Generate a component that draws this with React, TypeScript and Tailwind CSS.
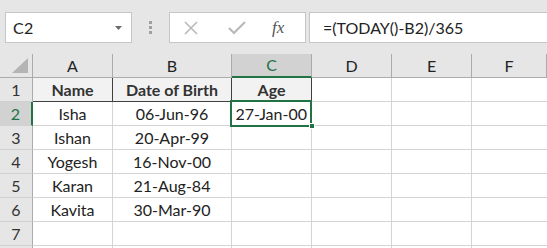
import React from "react";

const font = { fontFamily: "Lato, 'Open Sans', sans-serif" };

const rows = [
  ["Isha", "06-Jun-96"],
  ["Ishan", "20-Apr-99"],
  ["Yogesh", "16-Nov-00"],
  ["Karan", "21-Aug-84"],
  ["Kavita", "30-Mar-90"],
];

const cols = ["A", "B", "C", "D", "E", "F"];

const FormulaBar = () => (
  <div className="h-[54px] bg-[#e6e6e6] flex items-start pt-[12px] pl-[5px]">
    <div className="w-[127px] h-[31px] bg-white border border-[#c6c6c6] flex items-center justify-between pl-[7px] pr-[9px]">
      <span className="text-[16px] text-[#222] tracking-[0.3px]">C2</span>
      <svg width="7" height="4" viewBox="0 0 7 4">
        <polygon points="0,0 7,0 3.5,4" fill="#6b6b6b" />
      </svg>
    </div>
    <div className="w-[37px] h-[31px] flex flex-col items-center justify-center gap-[2px]">
      <div className="w-[3px] h-[3px] bg-[#a0a0a0]" />
      <div className="w-[3px] h-[3px] bg-[#a0a0a0]" />
      <div className="w-[3px] h-[3px] bg-[#a0a0a0]" />
    </div>
    <div className="w-[137px] h-[31px] bg-white border border-[#c6c6c6] flex items-center pl-[14px]">
      <svg width="14" height="14" viewBox="0 0 14 14">
        <path d="M1 1 L13 13 M13 1 L1 13" stroke="#b9b9b9" strokeWidth="1.6" />
      </svg>
      <svg width="18" height="14" viewBox="0 0 18 14" className="ml-[30px]">
        <path d="M1 7 L6 12 L17 1" stroke="#b9b9b9" strokeWidth="2.2" fill="none" />
      </svg>
      <span
        className="ml-[26px] text-[17px] italic text-[#555]"
        style={{ fontFamily: "'Liberation Serif', serif" }}
      >
        fx
      </span>
    </div>
    <div className="flex-1 ml-[3px] h-[31px] bg-white border border-r-0 border-[#c6c6c6] flex items-center pl-[13px]">
      <span className="text-[16px] text-[#222]">=(TODAY()-B2)/365</span>
    </div>
  </div>
);

export default function App() {
  return (
    <div className="w-[547px] h-[248px] overflow-hidden bg-white" style={font}>
      <FormulaBar />
      <div className="grid grid-cols-[33px_80px_119px_80px_80px_80px_1fr] auto-rows-[24px] text-[16px] text-[#222]">
        {/* column headers */}
        <div className="bg-[#e6e6e6] border-r border-b border-[#ababab] flex items-end justify-end pr-[4px] pb-[4px]">
          <svg width="16" height="15" viewBox="0 0 16 15">
            <polygon points="16,0 16,15 0,15" fill="#b4b4b4" />
          </svg>
        </div>
        {cols.map((c) =>
          c === "C" ? (
            <div
              key={c}
              className="bg-[#d2d2d2] border-r border-[#ababab] border-b-2 border-b-[#217346] flex items-center justify-center text-[#217346]"
            >
              {c}
            </div>
          ) : (
            <div
              key={c}
              className="bg-[#e6e6e6] border-r border-b border-[#ababab] flex items-center justify-center"
            >
              {c}
            </div>
          )
        )}

        {/* row 1 */}
        <div className="bg-[#e6e6e6] border-r border-b border-[#ababab] border-b-[#d0d0d0] flex items-center justify-center text-[#333]">
          1
        </div>
        <div className="bg-[#f2f2f2] border-r border-b border-[#3f3f3f] flex items-center justify-center font-bold text-[#333]">
          Name
        </div>
        <div className="bg-[#f2f2f2] border-r border-b border-[#3f3f3f] flex items-center justify-center font-bold text-[#333]">
          Date of Birth
        </div>
        <div className="bg-[#f2f2f2] border-r border-b border-[#3f3f3f] flex items-center justify-center font-bold text-[#333]">
          Age
        </div>
        <div className="border-r border-b border-[#d4d4d4]" />
        <div className="border-r border-b border-[#d4d4d4]" />
        <div className="border-b border-[#d4d4d4]" />

        {/* data rows */}
        {rows.map(([name, dob], i) => (
          <React.Fragment key={name}>
            {i === 0 ? (
              <div className="bg-[#d2d2d2] border-r-2 border-r-[#217346] border-b border-b-[#d0d0d0] flex items-center justify-center text-[#217346]">
                2
              </div>
            ) : (
              <div className="bg-[#e6e6e6] border-r border-b border-[#ababab] border-b-[#d0d0d0] flex items-center justify-center text-[#333]">
                {i + 2}
              </div>
            )}
            <div className="border-r border-b border-[#d4d4d4] flex items-center justify-center">
              {name}
            </div>
            <div className="border-r border-b border-[#d4d4d4] flex items-center justify-center">
              {dob}
            </div>
            {i === 0 ? (
              <div className="relative border-r border-b border-[#d4d4d4] flex items-center justify-end pr-[4px]">
                27-Jan-00
                <div className="absolute left-[-2px] top-[-2px] right-[-1px] bottom-[-2px] border-2 border-[#217346]" />
                <div className="absolute right-[-4px] bottom-[-4px] w-[6px] h-[6px] bg-[#217346] border border-white" />
              </div>
            ) : (
              <div className="border-r border-b border-[#d4d4d4]" />
            )}
            <div className="border-r border-b border-[#d4d4d4]" />
            <div className="border-r border-b border-[#d4d4d4]" />
            <div className="border-b border-[#d4d4d4]" />
          </React.Fragment>
        ))}

        {/* rows 7-8 */}
        {["7", ""].map((n, i) => (
          <React.Fragment key={i}>
            <div className="bg-[#e6e6e6] border-r border-b border-[#ababab] border-b-[#d0d0d0] flex items-center justify-center text-[#333]">
              {n}
            </div>
            <div className="border-r border-b border-[#d4d4d4]" />
            <div className="border-r border-b border-[#d4d4d4]" />
            <div className="border-r border-b border-[#d4d4d4]" />
            <div className="border-r border-b border-[#d4d4d4]" />
            <div className="border-r border-b border-[#d4d4d4]" />
            <div className="border-b border-[#d4d4d4]" />
          </React.Fragment>
        ))}
      </div>
    </div>
  );
}
